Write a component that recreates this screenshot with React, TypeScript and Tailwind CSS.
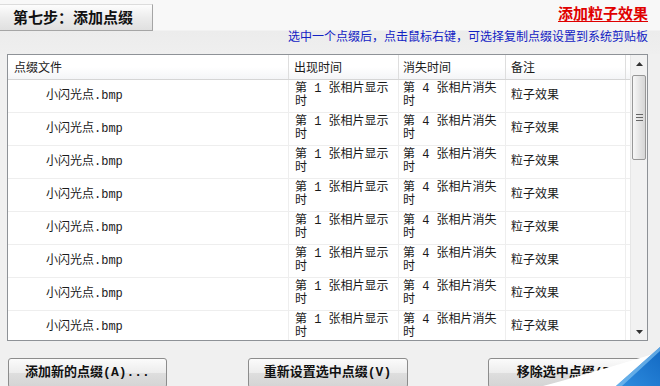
import React from "react";

const font = { fontFamily: '"Noto Sans CJK SC", "Noto Sans", sans-serif' };
const mono = { fontFamily: '"Liberation Mono", "Noto Sans CJK SC", monospace' };

function Row() {
  return (
    <div
      className="grid h-[33px] shrink-0 grid-cols-[280px_110px_107px_120px_1fr] border-b border-[#eeeeee] bg-white text-[12px] text-[#1a1a1a]"
      style={mono}
    >
      <div className="flex items-center pl-[38px]">小闪光点.bmp</div>
      <div className="border-l border-[#eeeeee] pl-[6px] pt-[3px] leading-[13px]">
        第 1 张相片显示
        <br />时
      </div>
      <div className="border-l border-[#eeeeee] pl-[4px] pt-[3px] leading-[13px]">
        第 4 张相片消失
        <br />时
      </div>
      <div className="flex items-center border-l border-[#eeeeee] pl-[5px]">粒子效果</div>
      <div className="border-l border-[#eeeeee]" />
    </div>
  );
}

function Scrollbar() {
  return (
    <div className="flex w-[17px] shrink-0 flex-col border-l border-[#e6e6e6] bg-[#f2f2f2]">
      {/* up */}
      <div className="flex h-[17px] items-center justify-center">
        <svg width="7" height="4" viewBox="0 0 7 4">
          <path d="M0 4 L3.5 0 L7 4 Z" fill="#333" />
        </svg>
      </div>
      {/* thumb */}
      <div className="mx-[1px] mt-[3px] flex h-[85px] items-center justify-center rounded-[2px] border border-[#979797] bg-[linear-gradient(90deg,#f7f7f7,#e2e2e2_60%,#d6d6d6)]">
        <div className="flex flex-col gap-[2px]">
          <div className="h-px w-[7px] bg-[#666]" />
          <div className="h-px w-[7px] bg-[#666]" />
          <div className="h-px w-[7px] bg-[#666]" />
        </div>
      </div>
      <div className="flex-1" />
      {/* down */}
      <div className="flex h-[17px] items-center justify-center">
        <svg width="7" height="4" viewBox="0 0 7 4">
          <path d="M0 0 L3.5 4 L7 0 Z" fill="#333" />
        </svg>
      </div>
    </div>
  );
}

function Button({ label, className }: { label: string; className: string }) {
  return (
    <div
      className={
        "flex h-[30px] items-center justify-center rounded-[3px] border border-[#8c8c8c] bg-[linear-gradient(180deg,#fbfbfb,#ececec_50%,#dedede_51%,#d4d4d4)] text-[13px] font-bold text-[#111] " +
        className
      }
      style={mono}
    >
      {label}
    </div>
  );
}

export default function App() {
  return (
    <div className="relative h-[386px] w-[660px] overflow-hidden bg-[#f0f0f0]" style={font}>
      {/* top */}
      <div className="flex h-[54px] flex-col bg-[linear-gradient(180deg,#f8f8f8,#f8f8f8_30px,#ececec_31px,#efefef)]">
        <div className="flex justify-between">
          <div className="mt-[4px] flex h-[27px] w-[153px] items-center border-b border-r border-t border-[#a5a5a5] border-t-[#dcdcdc] bg-[linear-gradient(180deg,#fdfdfd,#ececec_50%,#e0e0e0)] pl-[13px] text-[15px] font-bold text-[#111]">
            第七步：添加点缀
          </div>
          <div className="flex flex-col items-end pr-[12px] pt-[4px]">
            <span className="text-[15px] font-bold leading-[18px] text-[#e00000] underline underline-offset-2">
              添加粒子效果
            </span>
            <span className="mt-[6px] text-[12px] leading-[16px] text-[#1222c4]">
              选中一个点缀后，点击鼠标右键，可选择复制点缀设置到系统剪贴板
            </span>
          </div>
        </div>
      </div>

      {/* list */}
      <div className="ml-[7px] flex h-[287px] w-[641px] border border-[#8e9297] bg-white">
        <div className="flex flex-1 flex-col overflow-hidden">
          <div className="grid h-[25px] shrink-0 grid-cols-[280px_110px_107px_120px_1fr] border-b border-[#d5d5d5] bg-[linear-gradient(180deg,#ffffff,#ffffff_50%,#f4f5f7)] text-[12px] text-[#1a1a1a]">
            <div className="flex items-center pl-[6px]">点缀文件</div>
            <div className="flex items-center border-l border-[#dedede] pl-[5px]">出现时间</div>
            <div className="flex items-center border-l border-[#dedede] pl-[4px]">消失时间</div>
            <div className="flex items-center border-l border-[#dedede] pl-[5px]">备注</div>
            <div className="border-l border-[#dedede]" />
          </div>
          {Array.from({ length: 8 }).map((_, i) => (
            <Row key={i} />
          ))}
        </div>
        <Scrollbar />
      </div>

      {/* buttons */}
      <div className="mt-[17px] flex justify-between pl-[8px] pr-[13px]">
        <Button label="添加新的点缀(A)..." className="w-[159px]" />
        <Button label="重新设置选中点缀(V)" className="w-[160px]" />
        <Button label="移除选中点缀(D)" className="w-[159px]" />
      </div>

      {/* corner decoration */}
      <svg className="absolute bottom-0 right-0" width="120" height="40" viewBox="0 0 120 40">
        <defs>
          <linearGradient id="blue" x1="0" y1="1" x2="1" y2="0">
            <stop offset="0" stopColor="#2f8ee0" />
            <stop offset="1" stopColor="#1268c2" />
          </linearGradient>
        </defs>
        <path d="M3 40 C40 30 80 18 120 6 L120 40 Z" fill="#ffffff" />
        <path d="M76 40 L120 1 L120 40 Z" fill="url(#blue)" />
        <path d="M76 40 L120 1 L120 5 L82 40 Z" fill="#7fc0f0" opacity="0.7" />
      </svg>
    </div>
  );
}
